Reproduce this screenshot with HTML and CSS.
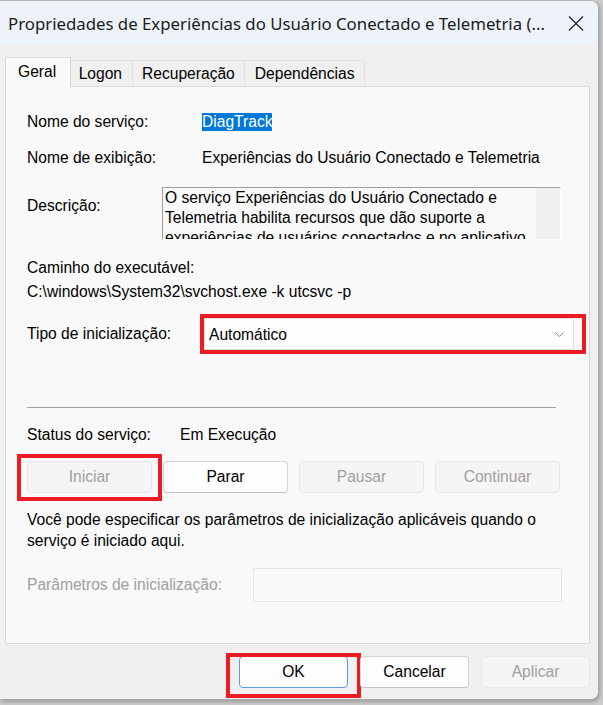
FILE: index.html
```html
<!DOCTYPE html>
<html lang="pt-BR">
<head>
    <meta charset="UTF-8">
    <meta name="viewport" content="width=device-width, initial-scale=1.0">
    <title>Propriedades de Experiências do Usuário Conectado e Telemetria</title>
    <link rel="stylesheet" href="styles.css">
</head>
<body>
    <div class="window">
        <div class="titlebar">
            <span class="title">Propriedades de Experiências do Usuário Conectado e Telemetria (...</span>
            <svg class="close" width="16" height="15" viewBox="0 0 16 15">
                <path d="M1 0.5 L15 14.5 M15 0.5 L1 14.5" stroke="#1b1b1b" stroke-width="1.1" fill="none"/>
            </svg>
        </div>

        <div class="tabs">
            <div class="tab active">Geral</div>
            <div class="tab">Logon</div>
            <div class="tab">Recuperação</div>
            <div class="tab">Dependências</div>
        </div>

        <div class="panel">
            <div class="row first">
                <span class="label">Nome do serviço:</span>
                <span class="selected">DiagTrack</span>
            </div>
            <div class="row display-name">
                <span class="label">Nome de exibição:</span>
                <span>Experiências do Usuário Conectado e Telemetria</span>
            </div>
            <div class="row desc-row">
                <span class="desc-label">Descrição:</span>
                <div class="desc-box">
                    <div class="desc-text">O serviço Experiências do Usuário Conectado e Telemetria habilita recursos que dão suporte a experiências de usuários conectados e no aplicativo. Além disso, o serviço gerencia a coleta e a transmissão de informações de diagnóstico e uso.</div>
                    <div class="scrollbar"></div>
                </div>
            </div>

            <div class="path-label">Caminho do executável:</div>
            <div class="path">C:\windows\System32\svchost.exe -k utcsvc -p</div>

            <div class="row startup">
                <span class="startup-label">Tipo de inicialização:</span>
                <div class="combo marked">
                    <span>Automático</span>
                    <svg class="chevron" width="9" height="5" viewBox="0 0 9 5">
                        <path d="M0.5 0.5 L4.5 4.5 L8.5 0.5" stroke="#8a8a8a" stroke-width="1" fill="none"/>
                    </svg>
                </div>
            </div>

            <div class="separator"></div>

            <div class="row status">
                <span class="status-label">Status do serviço:</span>
                <span>Em Execução</span>
            </div>

            <div class="actions">
                <button class="btn disabled marked start">Iniciar</button>
                <button class="btn">Parar</button>
                <button class="btn disabled">Pausar</button>
                <button class="btn disabled">Continuar</button>
            </div>

            <p class="hint">Você pode especificar os parâmetros de inicialização aplicáveis quando o serviço é iniciado aqui.</p>

            <div class="row params">
                <span class="params-label">Parâmetros de inicialização:</span>
                <div class="params-input"></div>
            </div>
        </div>

        <div class="footer">
            <button class="btn footer-btn ok marked">OK</button>
            <button class="btn footer-btn">Cancelar</button>
            <button class="btn footer-btn disabled">Aplicar</button>
        </div>
    </div>
</body>
</html>
```

FILE: styles.css
```css
* {
    box-sizing: border-box;
}
body {
    margin: 0;
    height: 705px;
    overflow: hidden;
    background: #cdcdcd;
    font-family: "Liberation Sans", Arial, sans-serif;
    font-size: 15.6px;
    color: #000;
}
.window {
    width: 599px;
    height: 700px;
    background: #f0f0f0;
    border-top: 1px solid #b9b9b9;
    border-right: 1px solid #a9a9a9;
    border-bottom: 1px solid #a9a9a9;
    border-radius: 0 8px 8px 0;
    box-shadow: 1px 2px 4px rgba(0,0,0,0.25);
    overflow: hidden;
}
.titlebar {
    height: 44px;
    display: flex;
    align-items: center;
    padding-left: 8px;
    background: #eef3f9;
}
.title {
    font-family: "Noto Sans", sans-serif;
    font-size: 16.8px;
    color: #1b1b1b;
    white-space: nowrap;
}
.close {
    margin-left: auto;
    margin-right: 14px;
}

/* tabs */
.tabs {
    display: flex;
    align-items: flex-end;
    height: 29px;
    margin-top: 12px;
    padding-left: 7px;
}
.tab {
    height: 26px;
    line-height: 25px;
    padding: 0 9.5px;
    border: 1px solid #e1e1e1;
    border-bottom: none;
    margin-left: -1px;
    background: #f0f0f0;
}
.tab.active {
    position: relative;
    z-index: 1;
    height: 30px;
    line-height: 27px;
    margin: 0 -2px -1px -2px;
    padding: 0 14px 0 12px;
    background: #f9f9f9;
    border-color: #dadada;
}

/* general panel */
.panel {
    height: 558px;
    margin: 0 8px 0 5px;
    padding: 25px 0 0 21px;
    background: #f9f9f9;
    border: 1px solid #dadada;
}
.row {
    display: flex;
    align-items: center;
    line-height: 20px;
}
.label {
    width: 175px;
}
.selected {
    line-height: 18px;
    background: #0078d7;
    color: #fff;
}
.display-name {
    margin-top: 16px;
}
.desc-row {
    margin-top: 19px;
    align-items: flex-start;
}
.desc-label {
    width: 135px;
    padding-top: 9px;
}
.desc-box {
    display: flex;
    width: 399px;
    height: 53px;
    overflow: hidden;
    border-top: 1px solid #a0a0a0;
    border-left: 1px solid #a0a0a0;
    border-right: 1px solid #fff;
    border-bottom: 1px solid #fff;
}
.desc-text {
    flex: 1;
    padding-left: 2px;
    line-height: 20px;
}
.scrollbar {
    width: 24px;
    background: #f0f0f0;
}
.path-label {
    margin-top: 18px;
    line-height: 20px;
}
.path {
    margin-top: 4px;
    line-height: 20px;
}
.startup {
    margin-top: 16px;
}
.startup-label {
    width: 177px;
}
.combo {
    display: flex;
    align-items: center;
    width: 370px;
    height: 32px;
    padding: 1px 9px 0 4px;
    background: #fdfdfd;
    border: 1px solid #dcdcdc;
}
.chevron {
    margin-left: auto;
}
.separator {
    width: 529px;
    height: 2px;
    margin-top: 57px;
    border-top: 1px solid #a0a0a0;
    border-bottom: 1px solid #fff;
}
.status {
    margin-top: 16px;
}
.status-label {
    width: 153px;
}
.actions {
    display: flex;
    gap: 11px;
    margin-top: 16px;
}
.btn {
    position: relative;
    width: 125px;
    height: 32px;
    padding: 0;
    font-family: inherit;
    font-size: inherit;
    color: #000;
    background: #fdfdfd;
    border: 1px solid #d3d3d3;
    border-bottom-color: #c2c2c2;
    border-radius: 4px;
}
.btn.disabled {
    color: #a0a0a0;
    background: #f5f5f5;
    border-color: #e6e6e6;
}
.hint {
    width: 535px;
    margin: 16px 0 0;
    line-height: 21px;
}
.params {
    margin-top: 17px;
}
.params-label {
    width: 226px;
    color: #a0a0a0;
}
.params-input {
    width: 309px;
    height: 34px;
    background: #fafafa;
    border: 1px solid #e6e6e6;
}

/* bottom buttons */
.footer {
    display: flex;
    justify-content: flex-end;
    gap: 12px;
    padding: 12px 8px 0 0;
}
.footer-btn {
    width: 109px;
}
.btn.ok {
    border-color: #5a9fdc;
}

/* red annotation boxes */
.marked {
    position: relative;
}
.marked::after {
    content: "";
    position: absolute;
    border: 4px solid #ed1c24;
    pointer-events: none;
}
.combo.marked::after {
    top: -5px;
    left: -5px;
    right: -13px;
    bottom: -5px;
}
.start.marked::after {
    top: -8px;
    left: -11px;
    right: -11px;
    bottom: -9px;
}
.ok.marked::after {
    top: -4px;
    left: -14px;
    right: -14px;
    bottom: -11px;
}
```
